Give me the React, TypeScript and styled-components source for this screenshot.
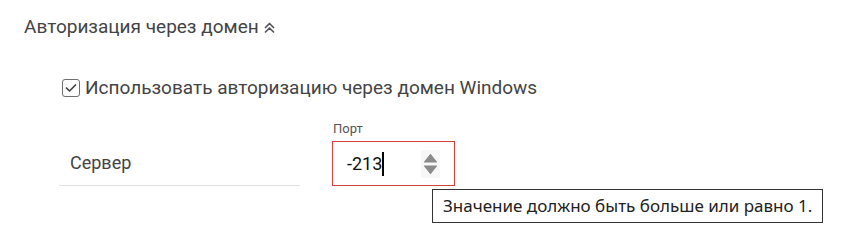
import styled, { createGlobalStyle } from "styled-components";

const Global = createGlobalStyle`
  body {
    margin: 0;
    background: #fff;
    font-family: Roboto, "Liberation Sans", sans-serif;
  }
`;

const Page = styled.div`
  position: relative;
  width: 844px;
  height: 247px;
  overflow: hidden;
`;

const SectionTitle = styled.div`
  display: flex;
  align-items: center;
  gap: 4px;
  padding: 16px 0 0 24px;
  font-size: 19px;
  line-height: 22px;
  color: #444;
`;

const CheckRow = styled.label`
  display: flex;
  align-items: center;
  gap: 5px;
  margin: 39px 0 0 62px;
  font-size: 19px;
  line-height: 22px;
  color: #444;
`;

const Box = styled.span`
  display: inline-flex;
  align-items: center;
  justify-content: center;
  width: 18px;
  height: 18px;
  box-sizing: border-box;
  border: 1.5px solid #707070;
  border-radius: 3px;
`;

const FieldRow = styled.div`
  display: flex;
  align-items: flex-end;
  gap: 32px;
  margin: 23px 0 0 59px;
`;

const PlainField = styled.div`
  width: 241px;
  height: 45px;
  box-sizing: border-box;
  padding: 11px 0 0 11px;
  border-bottom: 1px solid #e2e2e2;
  font-size: 18px;
  color: #444;
`;

const NumberField = styled.div`
  display: flex;
  flex-direction: column;
  gap: 5px;
`;

const Caption = styled.span`
  font-size: 13px;
  line-height: 14px;
  color: #555;
  padding-left: 1px;
`;

const InputBox = styled.div<{ $error?: boolean }>`
  display: flex;
  align-items: center;
  justify-content: space-between;
  width: 123px;
  height: 45px;
  box-sizing: border-box;
  padding: 0 14px 0 14px;
  border: 1px solid ${(p) => (p.$error ? "#d9403a" : "#ccc")};
  font-size: 18px;
  color: #111;
`;

const Value = styled.span`
  display: flex;
  align-items: center;
`;

const Caret = styled.span`
  display: inline-block;
  width: 2px;
  height: 24px;
  background: #000;
`;

const Spinner = styled.span`
  display: inline-flex;
  width: 19px;
  height: 28px;
  background: #f7f7f7;
  align-items: center;
  justify-content: center;
`;

const Tooltip = styled.div`
  position: absolute;
  left: 432px;
  top: 189px;
  padding: 5px 10px 5px 10px;
  border: 1.5px solid #333;
  background: #fff;
  font-family: "Noto Sans", "Open Sans", sans-serif;
  font-size: 17px;
  line-height: 22px;
  color: #222;
  white-space: nowrap;
`;

export default function App() {
  return (
    <Page>
      <Global />
      <SectionTitle>
        Авторизация через домен
        <svg width="13" height="13" viewBox="0 0 13 13" fill="none" stroke="#555" strokeWidth="1.7" strokeLinecap="round" strokeLinejoin="round">
          <path d="M2.5 6.5 L6.5 2.5 L10.5 6.5" />
          <path d="M2.5 11 L6.5 7 L10.5 11" />
        </svg>
      </SectionTitle>
      <CheckRow>
        <Box>
          <svg width="12" height="10" viewBox="0 0 12 10" fill="none" stroke="#444" strokeWidth="1.7" strokeLinecap="round" strokeLinejoin="round">
            <path d="M1.5 5 L4.5 8 L10.5 2" />
          </svg>
        </Box>
        Использовать авторизацию через домен Windows
      </CheckRow>
      <FieldRow>
        <PlainField>Сервер</PlainField>
        <NumberField>
          <Caption>Порт</Caption>
          <InputBox $error>
            <Value>
              -213
              <Caret />
            </Value>
            <Spinner>
              <svg width="15" height="22" viewBox="0 0 15 22" fill="#8a8a8a" stroke="#8a8a8a" strokeWidth="1.2" strokeLinejoin="round">
                <path d="M7.5 1.5 L13.5 9 L1.5 9 Z" />
                <path d="M1.5 13 L13.5 13 L7.5 20.5 Z" />
              </svg>
            </Spinner>
          </InputBox>
        </NumberField>
      </FieldRow>
      <Tooltip>Значение должно быть больше или равно 1.</Tooltip>
    </Page>
  );
}
